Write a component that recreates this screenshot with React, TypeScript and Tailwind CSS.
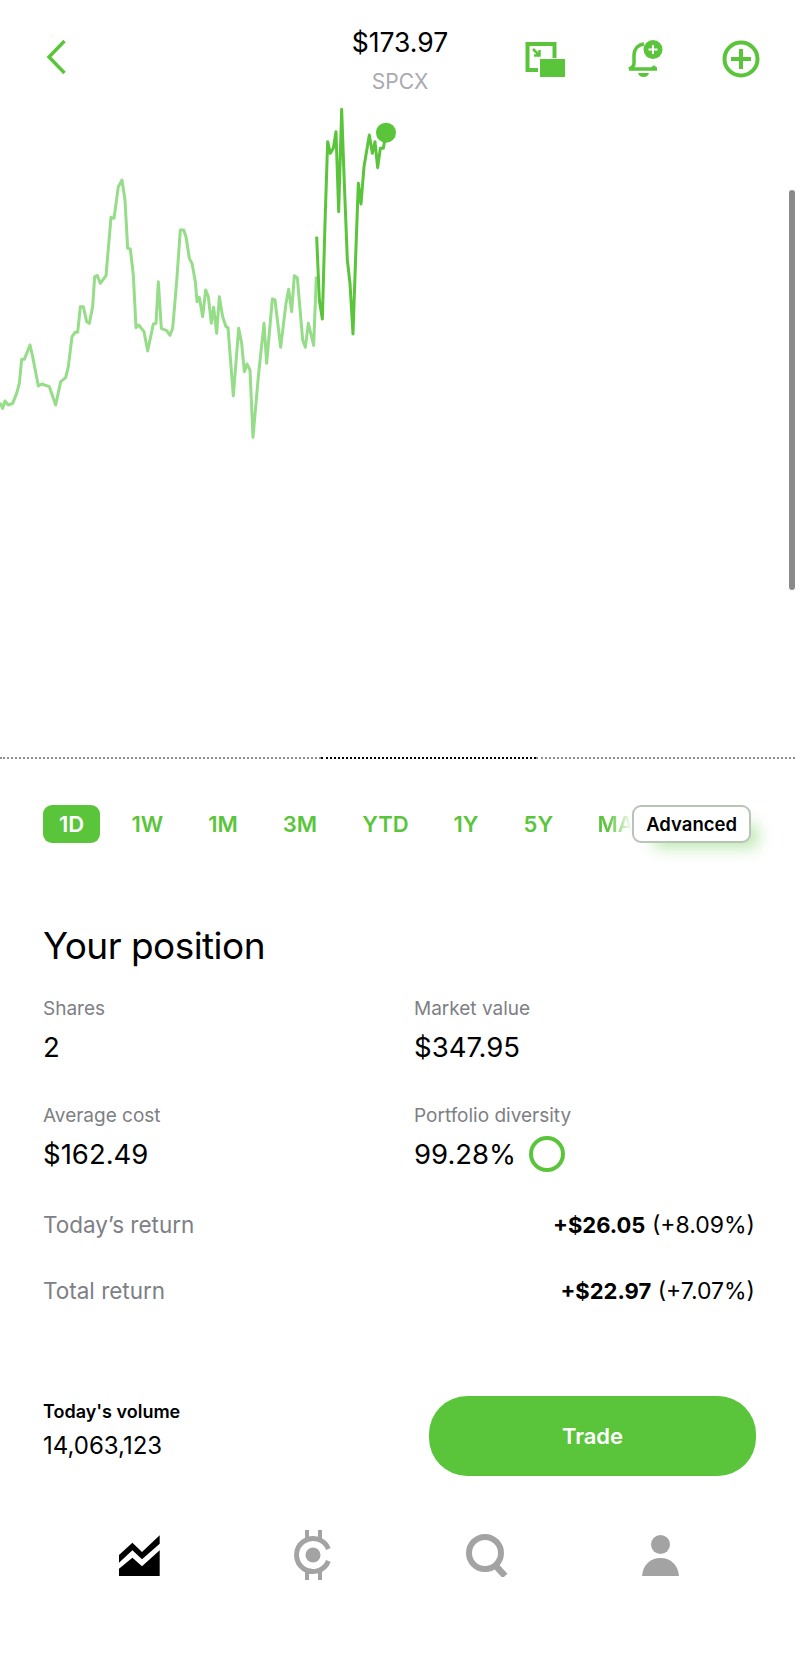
const light = "0,908 8,925 15,903 25,915 38,910 50,880 58,850 65,778 73,778 90,735 97,765 115,858 125,852 148,860 167,915 182,845 197,833 205,800 216,710 225,697 233,697 241,620 250,620 260,665 268,670 278,620 284,530 292,527 301,550 318,527 333,352 342,355 355,260 366,240 375,300 383,445 391,447 400,525 408,683 416,675 432,695 443,753 460,672 468,670 475,545 484,685 500,692 510,706 518,685 530,545 541,390 551,390 558,410 568,475 576,490 586,545 591,605 598,592 608,650 617,570 625,590 634,670 641,622 650,700 658,590 668,650 678,680 684,683 700,888 716,685 725,730 733,815 741,792 750,810 759,1012 775,830 792,670 800,790 817,597 825,600 842,742 858,610 866,568 875,635 883,527 892,533 908,720 916,742 925,670 941,736 949,530";
const dark = "950,410 958,600 967,657 975,370 983,125 991,160 1000,145 1008,95 1016,335 1025,28 1033,250 1042,480 1050,550 1059,702 1067,470 1075,250 1083,312 1092,200 1108,105 1117,160 1125,125 1133,203 1141,145 1150,145 1158,100";

const tabs = ["1W", "1M", "3M", "YTD", "1Y", "5Y"];

function Stat({ label, value, extra }: { label: string; value: string; extra?: boolean }) {
  return (
    <div>
      <div className="text-[19px] leading-[24px] text-[#7d8084]">{label}</div>
      <div className="mt-[10px] mb-[1px] flex h-[32px] items-center text-[27.5px] leading-[32px] text-black">
        {value}
        {extra && <span className="ml-[13px] size-[36px] rounded-full border-4 border-[#5ac53b]" />}
      </div>
    </div>
  );
}

function ReturnRow({ label, amount, pct }: { label: string; amount: string; pct: string }) {
  return (
    <div className="flex h-[32px] items-center justify-between leading-[32px]">
      <span className="text-[22.5px] text-[#7d8084]">{label}</span>
      <span className="text-[23px] text-black">
        <b className="text-[22px] font-bold">{amount}</b> {pct}
      </span>
    </div>
  );
}

export default function App() {
  return (
    <div className="relative h-[1656px] w-[800px] overflow-hidden bg-white font-['Inter',sans-serif]">
      <header className="grid h-[105px] grid-cols-[1fr_auto_1fr] pt-[26px]">
        <div className="pl-[46px] pt-[14px]">
          <svg width="20" height="34" viewBox="0 0 20 34" fill="none" stroke="#5ac53b" strokeWidth="3.500">
            <path d="M18.500 1 3 17l15.500 16" />
          </svg>
        </div>
        <div className="text-center">
          <div className="text-[26.5px] leading-[32px] text-black">$173.97</div>
          <div className="mt-[11px] text-[21px] leading-[26px] text-[#a8aaae]">SPCX</div>
        </div>
        <div className="flex items-start justify-end pr-[40px] pt-[14px]">
          <svg width="42" height="38" viewBox="0 0 42 38" fill="#5ac53b">
            <path d="M1.500 2h31v16h-4V6H5.500v22h8.500v4H1.500z" />
            <rect x="16" y="19" width="25" height="18" />
            <path d="M9 9l6 6M15.500 10v5.500h-5.500" fill="none" stroke="#5ac53b" strokeWidth="2.500" />
          </svg>
          <svg className="ml-[62px]" width="38" height="38" viewBox="0 0 38 38" fill="none">
            <path d="M16 4C9 5 6 10 6 15v8c0 3-2 5-5 6h28c-2 0-3-1-4-3" stroke="#5ac53b" strokeWidth="3.500" />
            <path d="M10 33h11c-1 3-3 4-5.500 4S11 36 10 33z" fill="#5ac53b" />
            <circle cx="25" cy="9.500" r="9.500" fill="#5ac53b" />
            <path d="M25 5v9M20.500 9.500h9" stroke="#fff" strokeWidth="2" />
          </svg>
          <svg className="ml-[56px]" width="38" height="38" viewBox="0 0 38 38" fill="none" stroke="#5ac53b" strokeWidth="4">
            <circle cx="19" cy="19" r="16.500" />
            <path d="M19 9v20M9 19h20" />
          </svg>
        </div>
      </header>

      <svg className="block" width="800" height="652" viewBox="0 0 800 652">
        <g transform="translate(0 -5) scale(0.33333)" fill="none" strokeWidth="9" strokeLinejoin="round">
          <polyline points={light} stroke="#96dd89" />
          <polyline points={dark} stroke="#5ac53b" />
          <circle cx="1158" cy="98" r="30" fill="#5ac53b" stroke="none" />
        </g>
      </svg>

      <div className="flex w-[795px]">
        <div className="w-[321px] border-t-2 border-dotted border-[#8f8f8f]" />
        <div className="w-[215px] border-t-2 border-dotted border-black" />
        <div className="flex-1 border-t-2 border-dotted border-[#8f8f8f]" />
      </div>

      <div className="ml-[43px] mt-[46px] flex h-[38px] items-center text-[22px] font-semibold text-[#5ac53b]">
        <div className="flex h-[38px] w-[57px] items-center justify-center rounded-[9px] bg-[#5ac53b] text-white">1D</div>
        <div className="ml-[9px] flex">
          {tabs.map((t) => (
            <span key={t} className="px-[22.5px]">{t}</span>
          ))}
        </div>
        <span className="ml-[22px] w-[34.5px] overflow-hidden bg-[linear-gradient(90deg,#5ac53b_30%,#ffffff_100%)] bg-clip-text whitespace-nowrap text-transparent">MA</span>
        <div className="flex h-[38px] w-[119px] items-center justify-center rounded-[9px] border-2 border-[#b9c4b9] bg-white pt-[2px] text-[18.500px] text-black shadow-[14px_12px_16px_-8px_rgba(90,197,59,0.45)]">
          Advanced
        </div>
      </div>

      <div className="mx-[43px]">
        <h2 className="mt-[80px] text-[37px] leading-[46px] font-normal tracking-[-0.55px] text-black">Your position</h2>
        <div className="mt-[28px] grid grid-cols-[371px_1fr] gap-y-[40px]">
          <Stat label="Shares" value="2" />
          <Stat label="Market value" value="$347.95" />
          <Stat label="Average cost" value="$162.49" />
          <Stat label="Portfolio diversity" value="99.28%" extra />
        </div>
        <div className="mt-[38px] flex flex-col gap-[34px] pr-[2px]">
          <ReturnRow label="Today’s return" amount="+$26.05" pct="(+8.09%)" />
          <ReturnRow label="Total return" amount="+$22.97" pct="(+7.07%)" />
        </div>
        <div className="mt-[89px] flex items-center justify-between pr-[1px]">
          <div className="pb-[13px]">
            <div className="text-[18px] leading-[24px] font-semibold text-black">Today's volume</div>
            <div className="mt-[8px] text-[24px] leading-[28px] text-black">14,063,123</div>
          </div>
          <button className="flex h-[80px] w-[327px] items-center justify-center rounded-[38px] bg-[#5ac53b] text-[22px] font-semibold text-white">
            Trade
          </button>
        </div>
      </div>

      <nav className="mt-[54px] grid grid-cols-4 items-center justify-items-center px-[53px]">
        <svg width="41" height="41" viewBox="119 1533 41 41" fill="#000">
          <path d="M119 1553 132.400 1540.700 142 1550 159.700 1533.300V1541.700L142 1557.300 132.400 1548.300 119 1560.700z" />
          <path d="M119 1574V1566.700L132.400 1555.700 142 1564.300 159.700 1548.300V1574z" />
        </svg>
        <svg width="38" height="50" viewBox="0 0 38 50">
          <path d="M34.400 19A16.500 16.500 0 1 0 34.400 31" fill="none" stroke="#a3a3a3" strokeWidth="5" />
          <ellipse cx="19" cy="25" rx="7.500" ry="7.500" fill="#a3a3a3" />
          <path d="M11 0h4v8h9V0h4v10H11zM11 50h4v-8h9v8h4V40H11z" fill="#a3a3a3" />
        </svg>
        <svg width="42" height="43" viewBox="0 0 42 43" fill="none" stroke="#a3a3a3">
          <circle cx="19" cy="19" r="16" strokeWidth="6" />
          <path d="M29 31l10 11" strokeWidth="6.500" />
        </svg>
        <svg width="37" height="41" viewBox="0 0 37 41" fill="#a3a3a3">
          <ellipse cx="18.500" cy="9.500" rx="9.500" ry="9.500" />
          <path d="M0 41C1 30 8 23 18.500 23S36 30 37 41z" />
        </svg>
      </nav>

      <div className="absolute left-[789px] top-[190px] h-[400px] w-[6px] rounded-full bg-[#8a8a8a]" />
    </div>
  );
}
